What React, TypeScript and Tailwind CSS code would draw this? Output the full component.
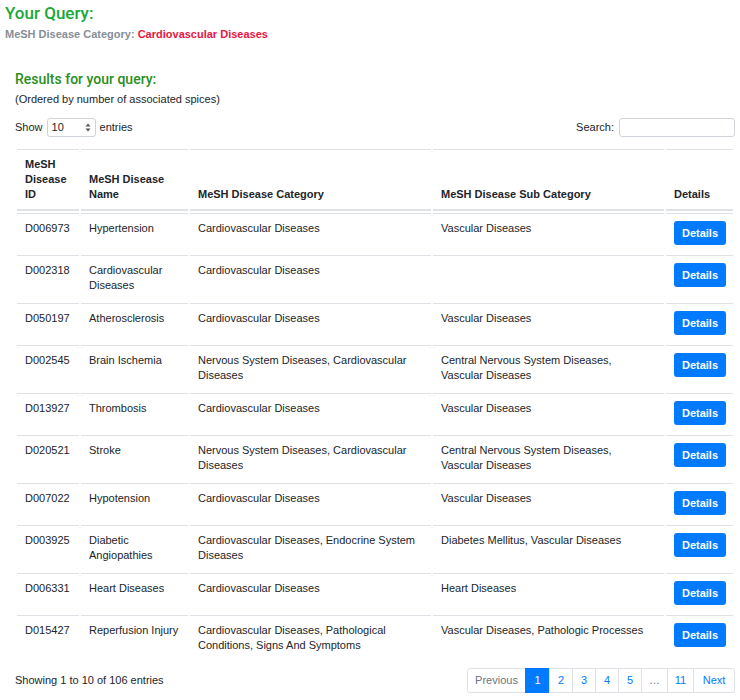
import React from "react";

type Row = { id: string; name: string; cat: string; sub: string };

const rows: Row[] = [
  { id: "D006973", name: "Hypertension", cat: "Cardiovascular Diseases", sub: "Vascular Diseases" },
  { id: "D002318", name: "Cardiovascular Diseases", cat: "Cardiovascular Diseases", sub: "" },
  { id: "D050197", name: "Atherosclerosis", cat: "Cardiovascular Diseases", sub: "Vascular Diseases" },
  { id: "D002545", name: "Brain Ischemia", cat: "Nervous System Diseases, Cardiovascular Diseases", sub: "Central Nervous System Diseases, Vascular Diseases" },
  { id: "D013927", name: "Thrombosis", cat: "Cardiovascular Diseases", sub: "Vascular Diseases" },
  { id: "D020521", name: "Stroke", cat: "Nervous System Diseases, Cardiovascular Diseases", sub: "Central Nervous System Diseases, Vascular Diseases" },
  { id: "D007022", name: "Hypotension", cat: "Cardiovascular Diseases", sub: "Vascular Diseases" },
  { id: "D003925", name: "Diabetic Angiopathies", cat: "Cardiovascular Diseases, Endocrine System Diseases", sub: "Diabetes Mellitus, Vascular Diseases" },
  { id: "D006331", name: "Heart Diseases", cat: "Cardiovascular Diseases", sub: "Heart Diseases" },
  { id: "D015427", name: "Reperfusion Injury", cat: "Cardiovascular Diseases, Pathological Conditions, Signs And Symptoms", sub: "Vascular Diseases, Pathologic Processes" },
];

const th = "border-t border-b-2 border-[#dee2e6] px-[8px] pt-[7px] pb-[7px] text-left align-bottom font-bold";
const td = "border-t border-[#dee2e6] px-[8px] pt-[7px] pb-[8px] align-top";

export default function App() {
  return (
    <div className="bg-white text-[#212529] text-[11px] leading-[15px] px-[5px] pb-[6px]" style={{ fontFamily: '"Liberation Sans", Arial, sans-serif' }}>
      <h1 className="pt-[3px] text-[17px] leading-[20px] font-medium text-[#1aa83a]" style={{ fontFamily: 'Roboto, "Liberation Sans", sans-serif' }}>
        Your Query:
      </h1>
      <div className="mt-[4px] font-bold text-[#868e96]">
        MeSH Disease Category: <span className="text-[#e8153d]">Cardiovascular Diseases</span>
      </div>
      <div className="pl-[10px]">
        <div className="mt-[28px] text-[14px] leading-[18px] font-medium text-[#2a8f1c]" style={{ fontFamily: 'Roboto, "Liberation Sans", sans-serif' }}>
          Results for your query:
        </div>
        <div className="mt-[4px]">(Ordered by number of associated spices)</div>
        <div className="mt-[11px] flex items-center justify-between">
          <div className="flex items-center">
            <span>Show</span>
            <div className="ml-[4px] mr-[4px] flex h-[19px] w-[49px] items-center justify-between rounded-[3px] border border-[#ced4da] pl-[4px] pr-[4px]">
              <span>10</span>
              <svg width="6" height="9" viewBox="0 0 6 9">
                <path d="M3 0.5 L5.5 3.5 H0.5 Z" fill="#555" />
                <path d="M3 8.5 L5.5 5.5 H0.5 Z" fill="#555" />
              </svg>
            </div>
            <span>entries</span>
          </div>
          <div className="flex items-center">
            <span>Search:</span>
            <div className="ml-[5px] h-[19px] w-[116px] rounded-[3px] border border-[#ced4da]" />
          </div>
        </div>
        <table className="mt-[10px] w-full table-fixed border-separate border-spacing-[2px]">
          <colgroup>
            <col className="w-[62px]" />
            <col className="w-[107px]" />
            <col className="w-[241px]" />
            <col className="w-[231px]" />
            <col className="w-[67px]" />
          </colgroup>
          <thead>
            <tr>
              <th className={th}>MeSH Disease ID</th>
              <th className={th}>MeSH Disease Name</th>
              <th className={th}>MeSH Disease Category</th>
              <th className={th}>MeSH Disease Sub Category</th>
              <th className={th}>Details</th>
            </tr>
          </thead>
          <tbody>
            {rows.map((r) => (
              <tr key={r.id}>
                <td className={td}>{r.id}</td>
                <td className={td}>{r.name}</td>
                <td className={td}>{r.cat}</td>
                <td className={td}>{r.sub}</td>
                <td className={td}>
                  <button className="flex h-[24px] w-[52px] items-center justify-center rounded-[3px] bg-[#007bff] font-bold text-white">
                    Details
                  </button>
                </td>
              </tr>
            ))}
          </tbody>
        </table>
        <div className="mt-[5px] flex items-center justify-between">
          <span>Showing 1 to 10 of 106 entries</span>
          <div className="flex h-[25px] text-[#007bff]">
            <span className="flex w-[59px] items-center justify-center rounded-l-[3px] border border-[#dee2e6] text-[#6c757d]">Previous</span>
            <span className="-ml-px flex w-[25px] items-center justify-center border border-[#007bff] bg-[#007bff] text-white">1</span>
            <span className="-ml-px flex w-[24px] items-center justify-center border border-[#dee2e6]">2</span>
            <span className="-ml-px flex w-[24px] items-center justify-center border border-[#dee2e6]">3</span>
            <span className="-ml-px flex w-[24px] items-center justify-center border border-[#dee2e6]">4</span>
            <span className="-ml-px flex w-[24px] items-center justify-center border border-[#dee2e6]">5</span>
            <span className="-ml-px flex w-[27px] items-center justify-center border border-[#dee2e6] text-[#6c757d]">…</span>
            <span className="-ml-px flex w-[27px] items-center justify-center border border-[#dee2e6]">11</span>
            <span className="-ml-px flex w-[42px] items-center justify-center rounded-r-[3px] border border-[#dee2e6]">Next</span>
          </div>
        </div>
      </div>
    </div>
  );
}
